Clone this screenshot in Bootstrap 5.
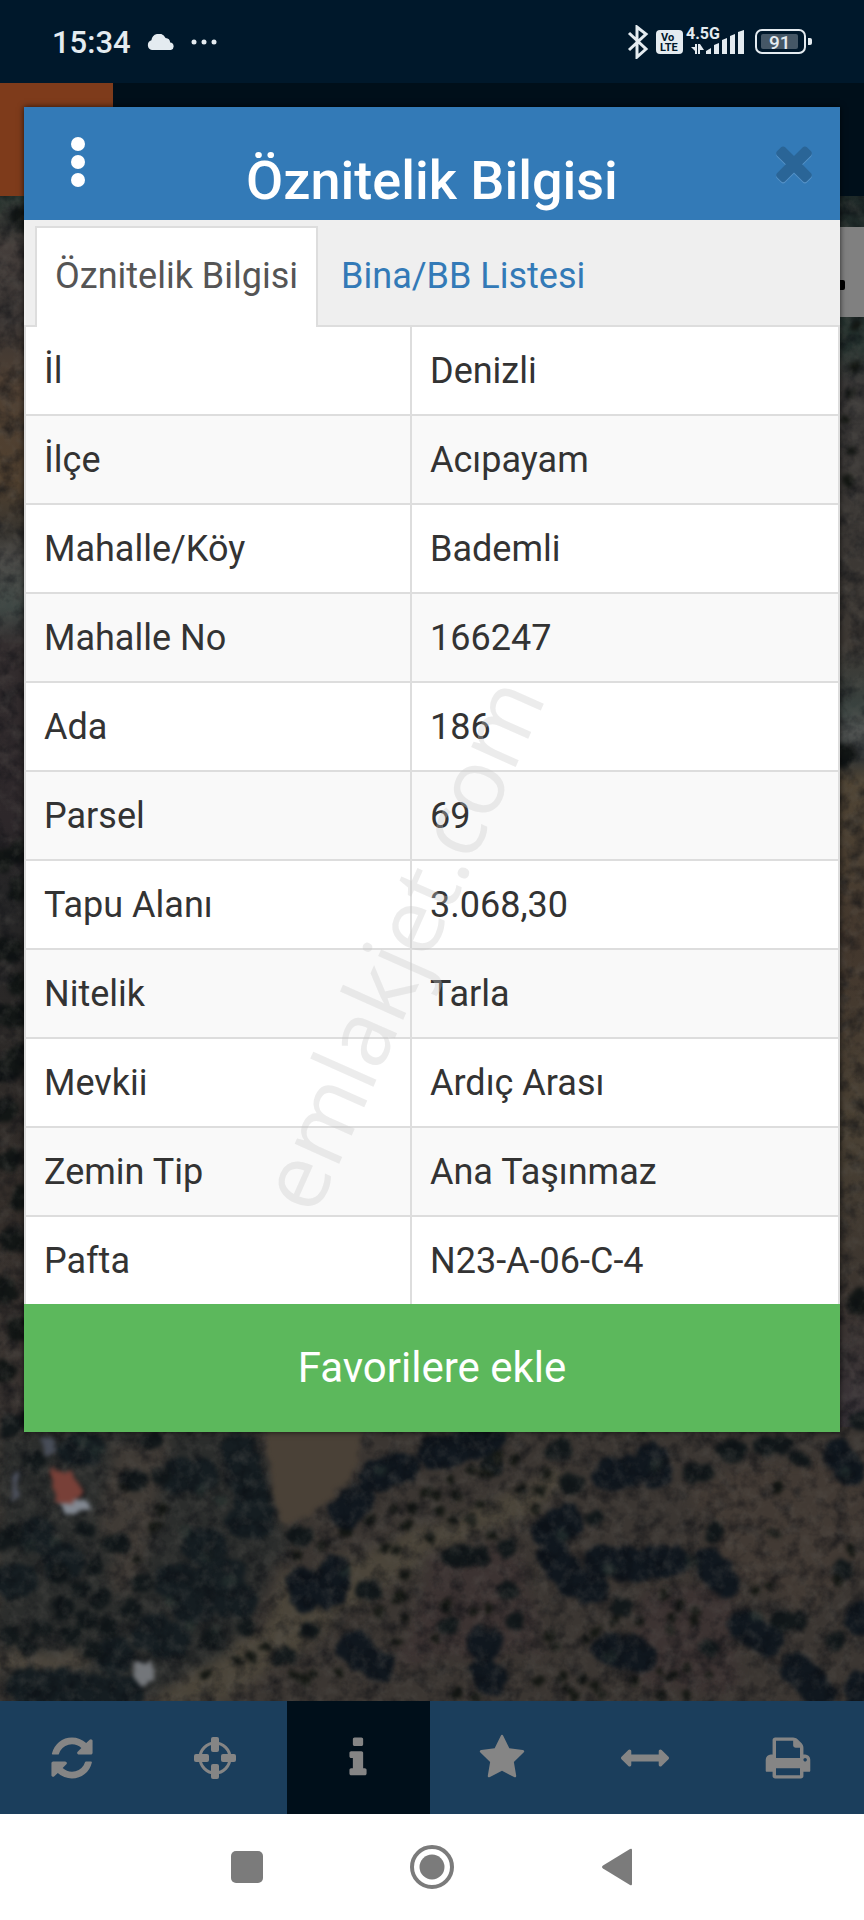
<!DOCTYPE html>
<html lang="tr">
<head>
<meta charset="utf-8">
<meta name="viewport" content="width=device-width, initial-scale=1">
<title>Öznitelik Bilgisi</title>
<link href="https://cdn.jsdelivr.net/npm/bootstrap@5.3.0/dist/css/bootstrap.min.css" rel="stylesheet">
<style>
body { font-family: Roboto, "Liberation Sans", sans-serif; background: #fff; color: #333; }
svg { display: block; }
.statusbar { background: #00182b; color: #e4ebf0; height: 83px; padding: 0 52px; }
.clock { font-size: 31px; line-height: 36px; font-weight: 500; padding-top: 3px; }
.app { display: grid; grid-template-rows: 1fr; }
.app > * { grid-area: 1 / 1; min-width: 0; }
.topbar { background: #000f1a; height: 113px; }
.logo-tile { background: #7e3b1b; width: 113px; }
.map-search { background: #808080; top: 31px; right: 0; width: 120px; height: 90px; }
.map-search i { background: #000; width: 12px; height: 10px; right: 19px; top: 53px; border-radius: 2px; }
.dialog { margin: 24px; box-shadow: 0 0 6px rgba(0,0,0,.7); background: #fff; z-index: 2; }
.dialog-head { background: #337ab7; height: 113px; color: #fff; }
.dialog-head h1 { font-size: 54px; line-height: 60px; font-weight: 500; padding-top: 44px; }
.icon-btn { border: 0; background: none; padding: 0; color: inherit; display: flex; align-items: center; justify-content: center; }
.head-btn { width: 60px; }
.dialog-tabs { background: #efefef; padding: 6px 11px 0; border-bottom: 2px solid #ddd; font-size: 36px; line-height: 48px; }
.dialog-tabs .nav-link { border: 2px solid transparent; border-bottom: 0; border-radius: 0; padding: 24px 18px 27px; color: #337ab7; margin-bottom: -2px; }
.dialog-tabs .nav-link.active { background: #fff; color: #555; border-color: #ddd; }
.tab-gap { margin-left: 3px; }
.info-table { font-size: 36px; line-height: 48px; border: 2px solid #ddd; border-top: 0; border-bottom: 0; table-layout: fixed; color: #333; }
.info-table th, .info-table td { font-weight: 400; padding: 20px 18px 19px; border: 0; border-bottom: 2px solid #ddd; text-align: left; }
.info-table th { width: 386px; border-right: 2px solid #ddd; }
.info-table tr:nth-child(even) { background: #f9f9f9; }
.info-table tr:last-child > * { border-bottom: 0; }
.watermark { left: 46%; top: 63%; transform: translate(-50%, -50%) rotate(-66deg); font-family: "Open Sans", sans-serif; font-size: 91px; line-height: 90px; color: rgba(200,200,200,.34); pointer-events: none; white-space: nowrap; }
.fav-btn { background: #5cb85c; color: #fff; border: 0; font-size: 42px; line-height: 48px; padding: 40px 0 40px; }
.toolbar { background: #1b3e5c; color: #858585; padding-right: 4px; height: 113px; }
.toolbar .active { background: #000f1a; }
.sysnav { background: #fff; color: #7b7b7b; height: 106px; }
.sysnav button { width: 185px; }
</style>
</head>
<body class="d-flex flex-column min-vh-100">

<header class="statusbar d-flex align-items-center">
  <span class="clock">15:34</span>
  <svg class="ms-3" width="28" height="16" viewBox="0 0 28 16" fill="currentColor"><path d="M5 16a5 5 0 0 1-.6-9.700A7.500 7.500 0 0 1 18.600 4a5 5 0 0 1 4.600 4.600A3.800 3.800 0 0 1 24 16z"/></svg>
  <svg class="ms-3" width="26" height="6" viewBox="0 0 26 6" fill="currentColor"><circle cx="3" cy="3" r="2.500"/><circle cx="13" cy="3" r="2.500"/><circle cx="23" cy="3" r="2.500"/></svg>
  <svg class="ms-auto" width="186" height="34" viewBox="626 25 186 34" fill="currentColor">
    <path d="M629 33l17 16-9 8V27l9 7-17 16" fill="none" stroke="currentColor" stroke-width="3"/>
    <rect x="656" y="30" width="27" height="24" rx="4"/>
    <g font-weight="700" font-size="11" fill="#00182b"><text x="661" y="41">Vo</text><text x="660" y="51">LTE</text></g>
    <text x="686" y="39" font-size="16" font-weight="700">4.5G</text>
    <path d="M697 44v10h-2v-3l-4-4h4v-3zM698 44h2l4 6h-4v4h-2zM706 51l5-3v6h-5zM714 45l5-2v11h-5zM722 40l5-2v16h-5zM730 36l5-2v20h-5zM738 32l6-2v24h-6z"/>
    <rect x="756" y="30" width="49" height="23" rx="6" fill="none" stroke="currentColor" stroke-width="2"/>
    <rect x="761" y="34" width="37" height="15" rx="2" opacity=".3"/><path d="M808 38h2q2 0 2 2v3q0 2-2 2h-2z"/>
    <text x="769" y="49" font-size="19" font-weight="500">91</text>
  </svg>
</header>

<main class="app flex-grow-1">
  <div class="d-flex flex-column">
    <div class="topbar d-flex"><div class="logo-tile"></div></div>
    <div class="position-relative flex-grow-1 overflow-hidden">
      <svg class="position-absolute top-0 start-0 w-100 h-100" viewBox="0 196 864 1504" preserveAspectRatio="xMidYMax slice" aria-label="Uydu haritası" color-interpolation-filters="sRGB">
        <defs>
          <linearGradient id="west" x1="0" y1="196" x2="0" y2="1440" gradientUnits="userSpaceOnUse">
            <stop offset="0" stop-color="#26332e"/><stop offset=".04" stop-color="#443d3a"/><stop offset=".1" stop-color="#3a3533"/><stop offset=".15" stop-color="#4f4033"/><stop offset=".23" stop-color="#50402f"/><stop offset=".27" stop-color="#37342f"/><stop offset=".29" stop-color="#4c4b48"/><stop offset=".33" stop-color="#3f4845"/><stop offset=".36" stop-color="#332d2e"/><stop offset=".5" stop-color="#2d272a"/><stop offset=".56" stop-color="#252526"/><stop offset=".8" stop-color="#332d29"/><stop offset="1" stop-color="#3c3633"/>
          </linearGradient>
          <linearGradient id="east" x1="0" y1="196" x2="0" y2="1440" gradientUnits="userSpaceOnUse">
            <stop offset="0" stop-color="#1d2827"/><stop offset=".12" stop-color="#26332f"/><stop offset=".15" stop-color="#3a3837"/><stop offset=".36" stop-color="#3d3833"/><stop offset=".41" stop-color="#39423f"/><stop offset=".43" stop-color="#535654"/><stop offset=".45" stop-color="#303435"/><stop offset=".47" stop-color="#4f4434"/><stop offset=".6" stop-color="#43372d"/><stop offset=".75" stop-color="#494033"/><stop offset=".87" stop-color="#3c352f"/><stop offset="1" stop-color="#39333a"/>
          </linearGradient>
          <filter id="rough" x="-5%" y="-5%" width="110%" height="110%"><feTurbulence type="fractalNoise" baseFrequency=".07" numOctaves="3" seed="4"/><feDisplacementMap in="SourceGraphic" scale="12" xChannelSelector="R" yChannelSelector="G"/><feGaussianBlur stdDeviation="2"/></filter>
          <filter id="soft" x="-5%" y="-5%" width="110%" height="110%"><feTurbulence type="fractalNoise" baseFrequency=".03" numOctaves="3" seed="9"/><feDisplacementMap in="SourceGraphic" scale="24" xChannelSelector="R" yChannelSelector="G"/><feGaussianBlur stdDeviation="6"/></filter>
          <filter id="grain" x="0" y="0" width="100%" height="100%"><feTurbulence type="fractalNoise" baseFrequency=".06" numOctaves="4" seed="2"/><feColorMatrix values="0 0 0 0 0.030  0 0 0 0 0.040  0 0 0 0 0.060  2 0 0 0 -0.850"/></filter>
          <filter id="glint" x="0" y="0" width="100%" height="100%"><feTurbulence type="fractalNoise" baseFrequency=".08" numOctaves="4" seed="12"/><feColorMatrix values="0 0 0 0 0.370  0 0 0 0 0.360  0 0 0 0 0.340  0 1.600 0 0 -0.700"/></filter>
        </defs>
        <rect y="196" width="864" height="1504" fill="#3b3632"/>
        <rect y="196" width="432" height="1230" fill="url(#west)"/>
        <rect x="432" y="196" width="432" height="1230" fill="url(#east)"/>
        <g filter="url(#soft)">
          <path d="M0 1430h260l30 110-60 110-90 50H0z" fill="#2b2d2c"/>
          <path d="M110 1440l60 0-10 50-20 100-30 0-10-70z" fill="#3f3a35"/>
          <path d="M560 1470L440 1520 285 1575 270 1620 150 1700 220 1700 330 1630 420 1560 560 1495z" fill="#4b453a"/>
          <path d="M690 1490q70-50 174-15v80l-60 60-90-50z" fill="#423a34"/>
          <path d="M0 1648l90 6-5 16H0z" fill="#4b453c"/>
          <path d="M430 1560l90-10 20 100-140 10zM640 1590l90 0 10 100-110-10z" fill="#3c3332"/>
        </g>
        <g filter="url(#rough)" stroke-linecap="round" fill="none">
          <path stroke="#151d21" stroke-width="36" d="M75 1448h12M180 1475h20M200 1545h8M238 1450l14 45M245 1520h12M172 1580h10M215 1575h12M190 1605h8M232 1600h8M150 1632h8M115 1655h3M38 1535h2M12 1580h6M60 1560h6M26 1685l100 8M165 1640h10"/>
          <path stroke="#10171e" stroke-width="32" d="M303 1582l4 14M334 1570l-4 24M352 1645l26 20M375 1475l28-8M345 1512l14-14M432 1452l60-14M652 1458l4 14M608 1474l20-4M548 1530l20-10M555 1556l18 24M600 1560l40 4M590 1588h2M655 1560h18M710 1562l14 20M486 1670l4 8M482 1642h6M610 1648l30 8M744 1624l24 16M796 1666l24 26M838 1454l12 14M860 1685v8M862 1615v4"/>
          <path stroke="#12181a" stroke-width="20" d="M36 1460h1M130 1480h8M160 1475h1M85 1528h1M112 1543h8M95 1565h1M60 1572h1M80 1588h1M100 1597h1M62 1606h4M86 1618h1M40 1627h1M70 1634h4M28 1645h1M108 1627h1M10 1634h1M130 1608h1M140 1582h1M92 1650h1M245 1626h1M208 1638h8M283 1655h4M310 1630h1M365 1590h8M298 1535h6M450 1555h30M506 1546h1M490 1465h6M555 1450h8M570 1482h4M692 1472h12M727 1450h10M762 1444h20M798 1458h1M595 1517h1M620 1607h4M714 1532h1M780 1620h20M842 1568h1M835 1640h1M708 1647h1M515 1620h1M507 1590h1M447 1625h1M0 1540h1M12 1535h1M150 1440h4M10 1425h4M26 1420h2M860 1420h4"/>
          <path stroke="#141713" stroke-width="10" d="M122 1486h1M160 1510h1M136 1560h1M155 1525h1M372 1518h1M405 1526h1M393 1507h1M414 1508h1M425 1490h1M430 1536h1M405 1573h1M345 1532h1M323 1544h1M295 1555h1M383 1548h1M396 1550h1M435 1495h1M440 1510h1M455 1495h1M450 1478h1M470 1470h1M485 1472h1M497 1457h1M516 1458h1M520 1488h1M480 1505h1M470 1518h1M452 1518h1M492 1533h1M536 1508h1M545 1473h1M540 1490h1M772 1533h1M778 1487h1M850 1549h1M754 1590h1M768 1585h1M837 1582h1M662 1595h1M680 1603h1M695 1610h1M672 1617h1M692 1620h1M640 1620h1M613 1620h1M595 1629h1M585 1638h1M555 1647h1M550 1635h1M560 1677h1M565 1689h1M572 1695h1M538 1678h1M583 1677h1M594 1686h1M602 1694h1M633 1680h1M660 1670h1M670 1676h1M687 1667h1M707 1673h1M688 1695h1M670 1630h1M294 1675h1M302 1680h1M312 1673h1M337 1671h1M265 1647h1M236 1661h1M252 1655h1M205 1675h1M380 1610h1M398 1596h1M406 1618h1M396 1640h1M472 1610h1M488 1608h1M445 1605h1M435 1638h1M457 1692h1M475 1697h1M660 1695h1M855 325h1M854 368h1M850 394h1M850 452h1M846 420h1M848 480h1"/>
          <path stroke="#121615" stroke-width="24" d="M22 218h2M842 756h4M0 860h2M22 850h1M20 890h1M4 950h8M20 985h1M8 1015h14M2 1070h8M20 1055h1M4 1110h1M8 1160h2M22 1195h1M12 1240h8M2 1290h4M18 1330h4M4 1370h2M860 1300v2"/>
          <path stroke="#283331" stroke-width="12" opacity=".6" d="M200 1490h2M185 1530h1M220 1500h1M170 1600h1M230 1580h1M206 1555h1M190 1625h1M30 1545h1M55 1540h1M85 1440h1M98 1450h1M345 1570h1M655 1465h1M560 1535h1M690 1560h1M610 1570h1M755 1615h1M610 1655h1M380 1470h1M216 1626h1M845 1470h1"/>
        </g>
        <rect y="196" width="864" height="1504" filter="url(#grain)" opacity=".6"/>
        <rect y="196" width="864" height="1504" filter="url(#glint)" opacity=".4"/>
        <g filter="url(#rough)">
          <path d="M262 1425h100q0 44-22 62-20 25-45 34-16 4-19-20z" fill="#4a4137"/>
          <path d="M53 1470h20l10 24-8 8H56z" fill="#784038"/><path d="M58 1502l28-3 4 8-26 8z" fill="#828891"/>
          <path d="M135 1664l16-5 4 16-14 12-7-8z" fill="#73767a"/><path d="M42 1436h12l4 14-12 6z" fill="#484d58"/><path d="M12 1475l8-4-2 26-6 4z" fill="#4c505c"/>
        </g>
      </svg>
      <div class="map-search position-absolute"><i class="position-absolute"></i></div>
    </div>
    <nav class="toolbar d-flex" aria-label="Harita araçları">
      <button class="icon-btn flex-fill" aria-label="Yenile"><svg width="48" height="48" viewBox="0 0 1792 1792" fill="currentColor"><path d="M1639 1056q0 5-1 7-64 268-268 434.500t-478 166.500q-146 0-282.500-55t-243.500-157l-129 129q-19 19-45 19t-45-19-19-45v-448q0-26 19-45t45-19h448q26 0 45 19t19 45-19 45l-137 137q71 66 161 102t187 36q134 0 250-65t186-179q11-17 53-117 8-23 30-23h192q13 0 22.500 9.500t9.500 22.500zm25-800v448q0 26-19 45t-45 19h-448q-26 0-45-19t-19-45 19-45l138-138q-148-137-349-137-134 0-250 65t-186 179q-11 17-53 117-8 23-30 23h-199q-13 0-22.500-9.500t-9.500-22.500v-7q65-268 270-434.500t480-166.500q146 0 284 55.500t245 156.500l130-129q19-19 45-19t45 19 19 45z"/></svg></button>
      <button class="icon-btn flex-fill" aria-label="Konum"><svg width="48" height="48" viewBox="0 0 48 48" fill="currentColor"><circle cx="24" cy="24" r="15" fill="none" stroke="currentColor" stroke-width="3"/><rect x="20" y="3" width="8" height="15" rx="2"/><rect x="20" y="30" width="8" height="15" rx="2"/><rect x="3" y="20" width="15" height="8" rx="2"/><rect x="30" y="20" width="15" height="8" rx="2"/></svg></button>
      <button class="icon-btn flex-fill active" aria-label="Bilgi"><svg width="48" height="48" viewBox="0 0 1792 1792" fill="currentColor"><path d="M1216 1344v128q0 26-19 45t-45 19h-512q-26 0-45-19t-19-45v-128q0-26 19-45t45-19h64v-384h-64q-26 0-45-19t-19-45v-128q0-26 19-45t45-19h384q26 0 45 19t19 45v576h64q26 0 45 19t19 45zm-128-1152v192q0 26-19 45t-45 19h-256q-26 0-45-19t-19-45v-192q0-26 19-45t45-19h256q26 0 45 19t19 45z"/></svg></button>
      <button class="icon-btn flex-fill" aria-label="Favoriler"><svg width="48" height="48" viewBox="0 0 1792 1792" fill="currentColor"><path d="M1728 647q0 22-26 48l-363 354 86 500q1 7 1 20 0 21-10.500 35.500t-30.500 14.500q-19 0-40-12l-449-236-449 236q-22 12-40 12-21 0-31.500-14.500t-10.500-35.500q0-6 2-20l86-500-364-354q-25-27-25-48 0-37 56-46l502-73 225-455q19-41 49-41t49 41l225 455 502 73q56 9 56 46z"/></svg></button>
      <button class="icon-btn flex-fill" aria-label="Ölçüm"><svg width="48" height="48" viewBox="0 0 1792 1792" fill="currentColor"><path d="M1792 896q0 26-19 45l-256 256q-19 19-45 19t-45-19-19-45v-128h-1024v128q0 26-19 45t-45 19-45-19l-256-256q-19-19-19-45t19-45l256-256q19-19 45-19t45 19 19 45v128h1024v-128q0-26 19-45t45-19 45 19l256 256q19 19 19 45z"/></svg></button>
      <button class="icon-btn flex-fill" aria-label="Yazdır"><svg width="48" height="48" viewBox="0 0 1792 1792" fill="currentColor"><path d="M448 1536h896v-256h-896v256zm0-640h896v-384h-160q-40 0-68-28t-28-68v-160h-640v640zm1152 64q0-26-19-45t-45-19-45 19-19 45 19 45 45 19 45-19 19-45zm128 0v416q0 13-9.500 22.500t-22.500 9.500h-224v160q0 40-28 68t-68 28h-960q-40 0-68-28t-28-68v-160h-224q-13 0-22.500-9.500t-9.500-22.500v-416q0-79 56.500-135.500t135.500-56.500h64v-544q0-40 28-68t68-28h672q40 0 88 20t76 48l152 152q28 28 48 76t20 88v256h64q79 0 135.500 56.500t56.500 135.500z"/></svg></button>
    </nav>
  </div>

  <section class="dialog align-self-start" role="dialog" aria-labelledby="dialog-title">
    <div class="dialog-head d-flex px-3">
      <button class="icon-btn head-btn ms-2 pb-1" aria-label="Menü"><svg width="14" height="50" viewBox="0 0 14 50" fill="currentColor"><circle cx="7" cy="7" r="7"/><circle cx="7" cy="25" r="7"/><circle cx="7" cy="43" r="7"/></svg></button>
      <h1 id="dialog-title" class="flex-grow-1 text-center mb-0 pe-2">Öznitelik Bilgisi</h1>
      <button class="icon-btn head-btn" aria-label="Kapat"><svg width="54" height="56" viewBox="0 0 1792 1860"><defs><path id="cross" d="M1490 1322q0 40-28 68l-136 136q-28 28-68 28t-68-28l-294-294-294 294q-28 28-68 28t-68-28l-136-136q-28-28-28-68t28-68l294-294-294-294q-28-28-28-68t28-68l136-136q28-28 68-28t68 28l294 294 294-294q28-28 68-28t68 28l136 136q28 28 28 68t-28 68l-294 294 294 294q28 28 28 68z"/></defs><use href="#cross" y="20" fill="#5592c8"/><use href="#cross" y="-20" fill="#2a6597"/></svg></button>
    </div>
    <nav class="dialog-tabs nav nav-tabs">
      <a class="nav-link active" href="#bilgi" aria-current="page">Öznitelik Bilgisi</a>
      <a class="nav-link tab-gap" href="#bina">Bina/BB Listesi</a>
    </nav>
    <div class="position-relative" id="bilgi">
      <table class="info-table w-100">
        <tbody>
          <tr><th scope="row">İl</th><td>Denizli</td></tr>
          <tr><th scope="row">İlçe</th><td>Acıpayam</td></tr>
          <tr><th scope="row">Mahalle/Köy</th><td>Bademli</td></tr>
          <tr><th scope="row">Mahalle No</th><td>166247</td></tr>
          <tr><th scope="row">Ada</th><td>186</td></tr>
          <tr><th scope="row">Parsel</th><td>69</td></tr>
          <tr><th scope="row">Tapu Alanı</th><td>3.068,30</td></tr>
          <tr><th scope="row">Nitelik</th><td>Tarla</td></tr>
          <tr><th scope="row">Mevkii</th><td>Ardıç Arası</td></tr>
          <tr><th scope="row">Zemin Tip</th><td>Ana Taşınmaz</td></tr>
          <tr><th scope="row">Pafta</th><td>N23-A-06-C-4</td></tr>
        </tbody>
      </table>
      <span class="watermark position-absolute">emlakjet.com</span>
    </div>
    <button class="fav-btn w-100 d-block">Favorilere ekle</button>
  </section>
</main>

<footer class="sysnav d-flex justify-content-center">
  <button class="icon-btn" aria-label="Son uygulamalar"><svg width="32" height="32" viewBox="0 0 32 32" fill="currentColor"><rect width="32" height="32" rx="5"/></svg></button>
  <button class="icon-btn" aria-label="Ana ekran"><svg width="44" height="44" viewBox="0 0 44 44" fill="currentColor"><circle cx="22" cy="22" r="20" fill="none" stroke="currentColor" stroke-width="4"/><circle cx="22" cy="22" r="12.500"/></svg></button>
  <button class="icon-btn" aria-label="Geri"><svg width="30" height="38" viewBox="0 0 30 38" fill="currentColor"><path d="M28 1q2-1 2 1v34q0 2-2 1L1 20.500q-2-1.500 0-3z"/></svg></button>
</footer>

<script src="https://cdn.jsdelivr.net/npm/bootstrap@5.3.0/dist/js/bootstrap.bundle.min.js"></script>
</body>
</html>
